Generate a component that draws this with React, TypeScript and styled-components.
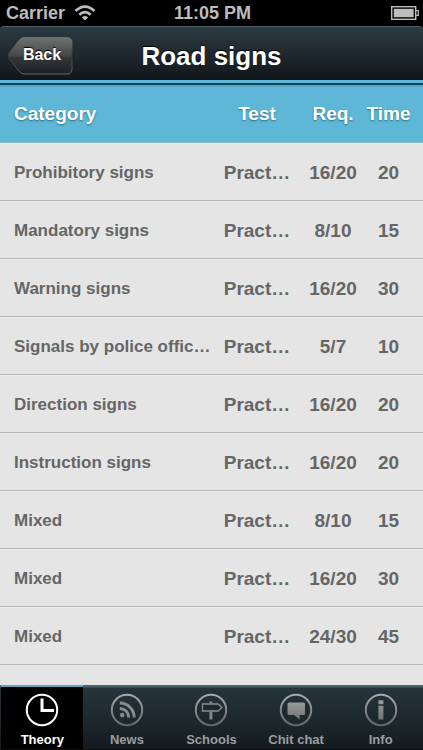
import React from "react";
import styled, { createGlobalStyle, css } from "styled-components";

const GlobalStyle = createGlobalStyle`
  *, *::before, *::after { box-sizing: border-box; }
  body {
    margin: 0;
    background: #000;
    font-family: "Liberation Sans", Helvetica, Arial, sans-serif;
    font-weight: bold;
  }
`;

const Screen = styled.div`
  display: flex;
  flex-direction: column;
  height: 100vh;
  background: #000;
`;

const StatusBar = styled.div`
  flex: none;
  display: grid;
  grid-template-columns: 1fr auto 1fr;
  align-items: center;
  height: 26px;
  padding: 0 4px 0 6px;
  color: #bdbdbd;
  font-size: 18px;
  line-height: 26px;
`;

const Carrier = styled.div`
  display: flex;
  align-items: center;
  gap: 9px;
`;

const Battery = styled.div`
  display: flex;
  justify-content: flex-end;
`;

const NavBar = styled.header`
  flex: none;
  display: grid;
  grid-template-columns: 1fr auto 1fr;
  align-items: center;
  height: 54px;
  padding: 4px 7px 0;
  border-top: 1px solid #4a5c65;
  border-radius: 4px 4px 0 0;
  background: linear-gradient(#2b3a41, #1f292f 50%, #11161a);
`;

const BackButton = styled.button`
  display: grid;
  justify-self: start;
  width: 66px;
  height: 38px;
  padding: 0;
  border: 0;
  background: none;
  color: #fff;
  font: bold 16px/36px "Liberation Sans", Helvetica, Arial, sans-serif;
  text-shadow: 0 -1px 1px #000;

  > * {
    grid-area: 1 / 1;
  }
`;

const BackLabel = styled.span`
  padding-left: 4px;
`;

const Title = styled.h1`
  margin: 0;
  color: #fff;
  font-size: 26px;
  line-height: 36px;
  text-shadow: 0 -1px 1px #000;
`;

const Content = styled.main`
  flex: 1;
  min-height: 0;
  overflow: hidden;
  border-top: 3px solid #5fb8d9;
  background: #e5e5e5;
`;

const SignTable = styled.table`
  width: 100%;
  table-layout: fixed;
  border-collapse: separate;
  border-spacing: 0;
  color: #666;
`;

const HeadRow = styled.tr`
  height: 60px;
  color: #fff;
  background: linear-gradient(#0e4259 2px, #549fba 2px, #5eb7d7 5px);
  text-shadow: 0 1px 2px #2d6e88;
`;

const Row = styled.tr`
  height: 58px;
`;

type Column = "category" | "test" | "required" | "time";

const columnStyle = {
  category: css`
    padding: 2px 10px 0 14px;
    text-align: left;
  `,
  test: css`
    width: 70px;
  `,
  required: css`
    width: 70px;
    padding-left: 12px;
  `,
  time: css`
    width: 61px;
    padding-right: 8px;
  `,
};

const cell = css<{ $column: Column }>`
  padding: 2px 0 0;
  font-weight: bold;
  line-height: 24px;
  text-align: center;
  white-space: nowrap;
  overflow: hidden;
  text-overflow: ellipsis;
  ${({ $column }) => columnStyle[$column]}
`;

const HeadCell = styled.th<{ $column: Column }>`
  ${cell}
  font-size: 19px;
  border-bottom: 1px solid #86b8ca;
`;

const Cell = styled.td<{ $column: Column }>`
  ${cell}
  font-size: ${({ $column }) => ($column === "category" ? 17 : 19)}px;
  border-bottom: 1px solid #b8b8b8;
  box-shadow: inset 0 1px #ededed;
`;

const TabBar = styled.nav`
  flex: none;
  display: flex;
  height: 65px;
  border-bottom: 1px solid #0a0d0f;
  background: linear-gradient(#4b626c 2px, #26343b 3px, #1d282e 55%, #141a1e);
`;

const Tab = styled.button<{ $active: boolean }>`
  flex: 1 1 0;
  min-width: 0;
  display: flex;
  flex-direction: column;
  align-items: center;
  gap: 5px;
  padding: 8px 0 0;
  border: 0;
  color: ${({ $active }) => ($active ? "#fff" : "#9a9d9f")};
  background: ${({ $active }) =>
    $active
      ? "linear-gradient(#5fa7c1 2px, #000 2px) 1px 0 / calc(100% - 3px) 100% no-repeat"
      : "none"};
  font: bold 13px/16px "Liberation Sans", Helvetica, Arial, sans-serif;
  white-space: nowrap;
`;

const WifiIcon = () => (
  <svg width="22" height="16" viewBox="0 0 22 16" fill="none" stroke="#bdbdbd" strokeWidth="2.6" aria-hidden="true">
    <path d="M1.5 6 Q11 -2.6 20.500 6" />
    <path d="M5.300 9.700 Q11 4.600 16.700 9.700" />
    <path d="M11 15.500 L7.900 12.400 Q11 9.700 14.100 12.400Z" fill="#bdbdbd" stroke="none" />
  </svg>
);

const BatteryIcon = () => (
  <svg width="28" height="14" viewBox="0 0 28 14" fill="none" stroke="#bdbdbd" aria-hidden="true">
    <rect x=".7" y=".7" width="24" height="12.600" strokeWidth="1.400" />
    <rect x="2.800" y="2.800" width="19.800" height="8.400" fill="#bdbdbd" stroke="none" />
    <path d="M25 4.700h2.300v4.600H25" strokeWidth="1.200" />
  </svg>
);

const BackShape = () => (
  <svg width="66" height="38" viewBox="0 0 66 38" aria-hidden="true">
    <defs>
      <linearGradient id="backFill" x2="0" y2="1">
        <stop stopColor="#707070" />
        <stop offset=".5" stopColor="#444749" />
        <stop offset=".55" stopColor="#33373a" />
        <stop offset="1" stopColor="#1c2023" />
      </linearGradient>
      <linearGradient id="backEdge" x2="0" y2="1">
        <stop stopColor="#777" />
        <stop offset=".5" stopColor="#34383a" />
        <stop offset="1" stopColor="#62676a" />
      </linearGradient>
    </defs>
    <path
      d="M17 .7H60Q65 .7 65 5.700V32Q65 37 60 37H17Q14 37 12 34L1.500 21Q.3 19 1.500 17L12 3.500Q14 .7 17 .7Z"
      fill="url(#backFill)"
      stroke="url(#backEdge)"
    />
  </svg>
);

const ring = (stroke: string) => (
  <circle cx="17" cy="17" r="15.200" fill="none" stroke={stroke} strokeWidth="2" />
);

const icons: Record<string, React.ReactNode> = {
  clock: (
    <>
      {ring("#fff")}
      <path d="M17 5.500V17.500H29" fill="none" stroke="#fff" strokeWidth="3" />
    </>
  ),
  feed: (
    <>
      {ring("url(#tabInk)")}
      <circle cx="12.200" cy="22.100" r="2.300" fill="#858789" />
      <path
        d="M9.800 15.400A9 9 0 0 1 18.800 24.400M9.800 10A14.400 14.400 0 0 1 24.200 24.400"
        fill="none"
        stroke="#898b8c"
        strokeWidth="3"
      />
    </>
  ),
  signpost: (
    <>
      {ring("url(#tabInk)")}
      <path d="M15.400 8.500h3v2h-3zM15.400 18.500h3v8h-3z" fill="#858789" />
      <path d="M8.500 11H24L28 14.500L24 18H8.500Z" fill="#1e292e" stroke="#8b8d8e" strokeWidth="1.300" />
    </>
  ),
  chat: (
    <>
      {ring("url(#tabInk)")}
      <path
        d="M10 9.500H24.500Q26 9.500 26 11V20.500Q26 22 24.500 22H20.700V26.500L15 22H10Q8.500 22 8.500 20.500V11Q8.500 9.500 10 9.500Z"
        fill="url(#tabInk)"
      />
    </>
  ),
  info: (
    <>
      {ring("url(#tabInk)")}
      <path d="M14.400 7.300h5v4h-5zM14.400 12.800h5V26.500h-5z" fill="url(#tabInk)" />
    </>
  ),
};

const TabIcon = ({ name }: { name: string }) => (
  <svg width="34" height="34" viewBox="0 0 34 34" aria-hidden="true">
    <defs>
      <linearGradient id="tabInk" gradientUnits="userSpaceOnUse" x1="0" y1="0" x2="0" y2="34">
        <stop stopColor="#adadad" />
        <stop offset="1" stopColor="#606365" />
      </linearGradient>
    </defs>
    {icons[name]}
  </svg>
);

const tests = [
  ["Prohibitory signs", "16/20", "20"],
  ["Mandatory signs", "8/10", "15"],
  ["Warning signs", "16/20", "30"],
  ["Signals by police officers", "5/7", "10"],
  ["Direction signs", "16/20", "20"],
  ["Instruction signs", "16/20", "20"],
  ["Mixed", "8/10", "15"],
  ["Mixed", "16/20", "30"],
  ["Mixed", "24/30", "45"],
];

const tabs = [
  ["Theory", "clock"],
  ["News", "feed"],
  ["Schools", "signpost"],
  ["Chit chat", "chat"],
  ["Info", "info"],
];

export default function App() {
  return (
    <Screen>
      <GlobalStyle />
      <StatusBar>
        <Carrier>
          Carrier
          <WifiIcon />
        </Carrier>
        <span>11:05 PM</span>
        <Battery>
          <BatteryIcon />
        </Battery>
      </StatusBar>
      <NavBar>
        <BackButton type="button">
          <BackShape />
          <BackLabel>Back</BackLabel>
        </BackButton>
        <Title>Road signs</Title>
      </NavBar>
      <Content>
        <SignTable>
          <thead>
            <HeadRow>
              <HeadCell $column="category">Category</HeadCell>
              <HeadCell $column="test">Test</HeadCell>
              <HeadCell $column="required">Req.</HeadCell>
              <HeadCell $column="time">Time</HeadCell>
            </HeadRow>
          </thead>
          <tbody>
            {tests.map(([category, required, time], index) => (
              <Row key={index}>
                <Cell $column="category">{category}</Cell>
                <Cell $column="test">Pract…</Cell>
                <Cell $column="required">{required}</Cell>
                <Cell $column="time">{time}</Cell>
              </Row>
            ))}
          </tbody>
        </SignTable>
      </Content>
      <TabBar>
        {tabs.map(([label, icon], index) => (
          <Tab key={label} type="button" $active={index === 0}>
            <TabIcon name={icon} />
            {label}
          </Tab>
        ))}
      </TabBar>
    </Screen>
  );
}
